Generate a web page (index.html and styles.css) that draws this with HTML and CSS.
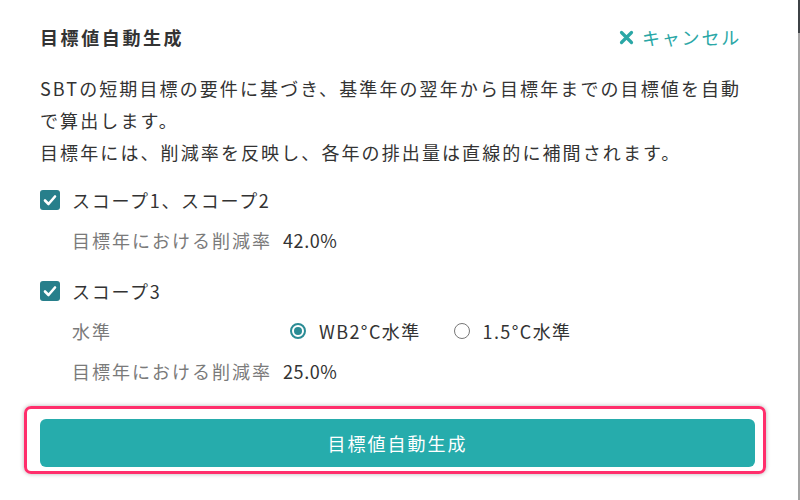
FILE: index.html
```html
<!DOCTYPE html>
<html lang="ja">
<head>
<meta charset="utf-8">
<link rel="stylesheet" href="styles.css">
</head>
<body>
<div class="page">
  <div class="panel">
    <div class="header">
      <h1 class="title">目標値自動生成</h1>
      <a class="cancel"><svg class="x-icon" viewBox="0 0 15 15" width="15" height="15"><path d="M2.5 2.5 L12.5 12.5 M12.5 2.5 L2.5 12.5" stroke="currentColor" stroke-width="3.2" stroke-linecap="round"/></svg>キャンセル</a>
    </div>
    <p class="desc">SBTの短期目標の要件に基づき、基準年の翌年から目標年までの目標値を自動で算出します。<br>目標年には、削減率を反映し、各年の排出量は直線的に補間されます。</p>

    <div class="group">
      <label class="check-row"><span class="checkbox"><svg viewBox="0 0 20 20" width="20" height="20"><path d="M5 10.5 L8.5 14 L15 6.5" fill="none" stroke="#fff" stroke-width="2.6" stroke-linecap="round" stroke-linejoin="round"/></svg></span>スコープ1、スコープ2</label>
      <div class="sub-row"><span class="label">目標年における削減率</span><span class="value">42.0%</span></div>
    </div>

    <div class="group group2">
      <label class="check-row"><span class="checkbox"><svg viewBox="0 0 20 20" width="20" height="20"><path d="M5 10.5 L8.5 14 L15 6.5" fill="none" stroke="#fff" stroke-width="2.6" stroke-linecap="round" stroke-linejoin="round"/></svg></span>スコープ3</label>
      <div class="sub-row level-row">
        <span class="label level-label">水準</span>
        <span class="radio-opt first"><span class="radio checked"></span>WB2°C水準</span>
        <span class="radio-opt second"><span class="radio"></span>1.5°C水準</span>
      </div>
      <div class="sub-row"><span class="label">目標年における削減率</span><span class="value">25.0%</span></div>
    </div>

    <div class="btn-wrap">
      <button class="primary">目標値自動生成</button>
    </div>
  </div>
  <div class="side"><div class="side-top"></div></div>
</div>
</body>
</html>
```
FILE: styles.css
```css
* { box-sizing: border-box; }
html, body { margin: 0; padding: 0; background: #fff; }
body {
  font-family: "Noto Sans CJK JP", "Noto Sans", sans-serif;
  color: #333;
  width: 800px;
  height: 500px;
  overflow: hidden;
}
.page {
  display: flex;
  width: 800px;
  height: 500px;
}
.panel {
  flex: 1;
  padding: 20px 0 0 0;
}
.side {
  width: 2px;
  background: #a3a3a3;
}
.side-top {
  height: 33px;
  background: #3e4246;
}
.header {
  display: flex;
  align-items: center;
  justify-content: space-between;
  padding: 0 58px 0 40px;
  height: 34px;
}
.title {
  margin: 0;
  font-size: 18px;
  font-weight: 700;
  letter-spacing: 2.6px;
  color: #333;
}
.cancel {
  display: flex;
  align-items: center;
  gap: 8px;
  color: #2aa7a6;
  font-size: 18px;
  letter-spacing: 1.8px;
  margin-right: -1px;
}
.x-icon { display: block; }
.desc {
  margin: 18px 0 0 40px;
  width: 712px;
  font-size: 18px;
  line-height: 32px;
  letter-spacing: 2.1px;
  color: #333;
}
.group {
  margin: 12px 0 0 40px;
}
.group2 { margin-top: 11px; }
.check-row {
  display: flex;
  align-items: center;
  height: 40px;
  font-size: 18px;
  letter-spacing: 1.7px;
  color: #333;
}
.checkbox {
  width: 20px;
  height: 20px;
  border-radius: 3px;
  background: #277f8b;
  margin-right: 12px;
  display: flex;
}
.sub-row {
  display: flex;
  align-items: center;
  height: 40px;
  margin-left: 32px;
  font-size: 18px;
}
.sub-row .label {
  color: #7a7a7a;
  margin-right: 11px;
  letter-spacing: 2px;
}
.sub-row .value { color: #333; letter-spacing: 0.6px; }
.sub-row .level-label { width: 207px; }
.radio-opt {
  display: flex;
  align-items: center;
  color: #333;
  letter-spacing: 1.4px;
}
.radio-opt.first { margin-right: 33px; }
.radio {
  width: 16px;
  height: 16px;
  border-radius: 50%;
  border: 1.5px solid #777;
  margin-right: 13px;
  position: relative;
}
.radio.checked {
  border: 2px solid #2a8c95;
}
.radio.checked::after {
  content: "";
  position: absolute;
  left: 2px;
  top: 2px;
  width: 8px;
  height: 8px;
  border-radius: 50%;
  background: #2a8c95;
}
.btn-wrap {
  margin: 15px 32px 0 24px;
  border: 3px solid #ff2f6c;
  border-radius: 7px;
  padding: 10px 8px 4px 13px;
  box-shadow: 0 0 4px rgba(0,0,0,0.3);
  height: 68px;
}
.primary {
  display: block;
  width: 100%;
  height: 48px;
  border: none;
  border-radius: 6px;
  background: #26acac;
  color: #fff;
  font-family: "Noto Sans CJK JP", sans-serif;
  font-size: 18px;
  letter-spacing: 2px;
}
```
